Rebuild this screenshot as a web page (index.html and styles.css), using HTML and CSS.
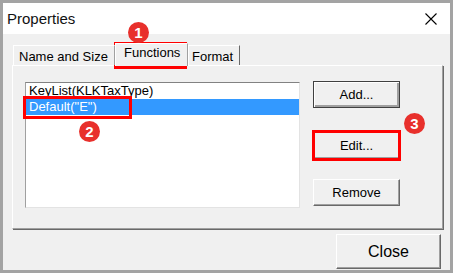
FILE: index.html
```html
<!DOCTYPE html>
<html lang="en">
<head>
  <meta charset="UTF-8">
  <title>Properties</title>
  <link rel="stylesheet" href="styles.css">
</head>
<body>

  <!-- Dialog -->
  <div class="window">
    <div class="titlebar">
      <span class="title">Properties</span>
      <svg class="close-x" width="12" height="12" viewBox="0 0 12 12">
        <path d="M0.5 0.5 L11.5 11.5 M11.5 0.5 L0.5 11.5" stroke="#000" stroke-width="1.1" fill="none"/>
      </svg>
    </div>

    <div class="dialog-body">
      <div class="tabs">
        <div class="tab tab-name">Name and Size</div>
        <div class="tab tab-functions active">Functions</div>
        <div class="tab tab-format">Format</div>
      </div>

      <div class="panel">
        <div class="listbox">
          <div class="item">KeyList(KLKTaxType)</div>
          <div class="item selected">Default("E")</div>
        </div>
        <div class="buttons">
          <button class="btn btn-default">Add...</button>
          <button class="btn btn-edit">Edit...</button>
          <button class="btn btn-remove">Remove</button>
        </div>
      </div>

      <div class="footer">
        <button class="btn btn-close">Close</button>
      </div>
    </div>
  </div>

  <!-- Annotations -->
  <span class="mark mark-tab"></span>
  <span class="mark mark-item"></span>
  <span class="mark mark-edit"></span>
  <span class="badge badge-1">1</span>
  <span class="badge badge-2">2</span>
  <span class="badge badge-3">3</span>

</body>
</html>
```

FILE: styles.css
```css
body {
  margin: 0;
  padding: 0;
  position: relative;
  font-family: 'Liberation Sans', Arial, sans-serif;
  font-size: 13px;
  color: #000;
}

.window {
  width: 453px;
  height: 273px;
  box-sizing: border-box;
  border: 3px solid #a3a3a3;
  background: #f0f0f0;
}

.titlebar {
  height: 31px;
  background: #fff;
  display: flex;
  align-items: center;
  justify-content: space-between;
  padding: 0 13px 0 4px;
}

.title {
  font-size: 15px;
  color: #111;
  margin-top: -1px;
}

.dialog-body {
  padding: 9px 0 0 9px;
}

/* Tabs */
.tabs {
  display: flex;
  align-items: flex-end;
  margin-left: 1px;
  height: 22px;
  position: relative;
  z-index: 2;
}

.tab {
  height: 20px;
  box-sizing: border-box;
  border-top: 1px solid #fff;
  border-left: 1px solid #fff;
  border-right: 1px solid #a0a0a0;
  padding: 4px 0 0 5px;
  line-height: 14px;
  background: #f0f0f0;
}

.tab-name {
  width: 102px;
}

.tab-functions {
  width: 73px;
}

.tab-format {
  width: 52px;
  border-right: 1px solid #696969;
  padding-left: 3px;
}

.tab.active {
  height: 23px;
  margin-bottom: -1px;
  padding: 2px 0 0 8px;
}

.panel {
  width: 431px;
  height: 164px;
  box-sizing: border-box;
  border-top: 1px solid #fff;
  border-left: 1px solid #fff;
  border-right: 1px solid #a0a0a0;
  border-bottom: 1px solid #a0a0a0;
  box-shadow: 1px 1px 0 #696969;
  display: flex;
  padding: 16px 0 0 12px;
  gap: 13px;
}

.listbox {
  width: 275px;
  height: 126px;
  box-sizing: border-box;
  background: #fff;
  border-top: 1px solid #828282;
  border-left: 1px solid #a0a0a0;
  border-right: 1px solid #e3e3e3;
  border-bottom: 1px solid #e3e3e3;
}

.item {
  height: 16px;
  line-height: 16px;
  padding-left: 3px;
  white-space: nowrap;
}

.item.selected {
  background: #3399ff;
  color: #fff;
}

.buttons {
  display: flex;
  flex-direction: column;
  margin-top: -1px;
}

.btn {
  font-family: 'Liberation Sans', Arial, sans-serif;
  font-size: 13px;
  color: #000;
  background: #f0f0f0;
  width: 87px;
  height: 27px;
  padding: 0;
  box-sizing: border-box;
  border-top: 1px solid #fff;
  border-left: 1px solid #fff;
  border-right: 1px solid #696969;
  border-bottom: 1px solid #696969;
  box-shadow: inset -1px -1px 0 #a0a0a0;
}

.btn-default {
  border: 1px solid #404040;
  box-shadow: inset 1px 1px 0 #fff, inset -2px -2px 0 #a0a0a0;
}

.btn-edit {
  margin-top: 24px;
}

.btn-remove {
  margin-top: 20px;
}

.footer {
  display: flex;
  justify-content: flex-end;
  padding: 5px 9px 0 0;
}

.btn-close {
  width: 105px;
  height: 35px;
  font-size: 16px;
}

/* Annotations */
.mark {
  position: absolute;
  box-sizing: border-box;
  border: 3px solid #ff0000;
}

.mark-tab {
  left: 114px;
  top: 42px;
  width: 73px;
  height: 27px;
}

.mark-item {
  left: 23px;
  top: 96px;
  width: 109px;
  height: 23px;
}

.mark-edit {
  left: 312px;
  top: 130px;
  width: 89px;
  height: 31px;
}

.badge {
  position: absolute;
  width: 21px;
  height: 21px;
  border-radius: 50%;
  background: #e8302c;
  color: #fff;
  font-family: 'Liberation Sans', Arial, sans-serif;
  font-weight: bold;
  font-size: 15px;
  line-height: 21px;
  text-align: center;
}

.badge-1 {
  left: 128px;
  top: 22px;
}

.badge-2 {
  left: 79px;
  top: 121px;
}

.badge-3 {
  left: 404px;
  top: 113px;
}
```
